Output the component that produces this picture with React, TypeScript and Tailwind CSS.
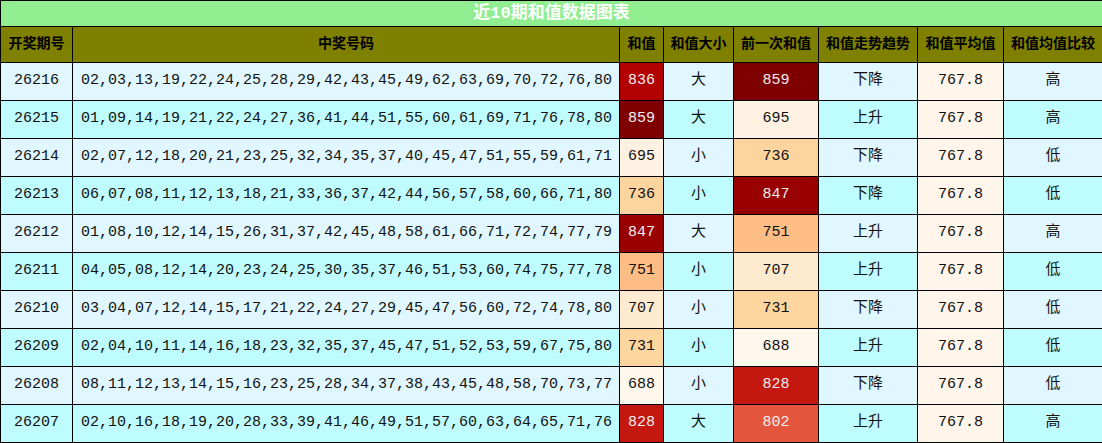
const rows = [
  { id: "26216", nums: "02,03,13,19,22,24,25,28,29,42,43,45,49,62,63,69,70,72,76,80", sum: 836, size: "大", prev: 859, trend: "下降", cmp: "高" },
  { id: "26215", nums: "01,09,14,19,21,22,24,27,36,41,44,51,55,60,61,69,71,76,78,80", sum: 859, size: "大", prev: 695, trend: "上升", cmp: "高" },
  { id: "26214", nums: "02,07,12,18,20,21,23,25,32,34,35,37,40,45,47,51,55,59,61,71", sum: 695, size: "小", prev: 736, trend: "下降", cmp: "低" },
  { id: "26213", nums: "06,07,08,11,12,13,18,21,33,36,37,42,44,56,57,58,60,66,71,80", sum: 736, size: "小", prev: 847, trend: "下降", cmp: "低" },
  { id: "26212", nums: "01,08,10,12,14,15,26,31,37,42,45,48,58,61,66,71,72,74,77,79", sum: 847, size: "大", prev: 751, trend: "上升", cmp: "高" },
  { id: "26211", nums: "04,05,08,12,14,20,23,24,25,30,35,37,46,51,53,60,74,75,77,78", sum: 751, size: "小", prev: 707, trend: "上升", cmp: "低" },
  { id: "26210", nums: "03,04,07,12,14,15,17,21,22,24,27,29,45,47,56,60,72,74,78,80", sum: 707, size: "小", prev: 731, trend: "下降", cmp: "低" },
  { id: "26209", nums: "02,04,10,11,14,16,18,23,32,35,37,45,47,51,52,53,59,67,75,80", sum: 731, size: "小", prev: 688, trend: "上升", cmp: "低" },
  { id: "26208", nums: "08,11,12,13,14,15,16,23,25,28,34,37,38,43,45,48,58,70,73,77", sum: 688, size: "小", prev: 828, trend: "下降", cmp: "低" },
  { id: "26207", nums: "02,10,16,18,19,20,28,33,39,41,46,49,51,57,60,63,64,65,71,76", sum: 828, size: "大", prev: 802, trend: "上升", cmp: "高" },
];

// heat colours for the sum cells
const heat: Record<number, string> = {
  859: "bg-[#7f0000] text-[#eeeeee]",
  847: "bg-[#990000] text-[#eeeeee]",
  836: "bg-[#b30000] text-[#eeeeee]",
  828: "bg-[#c4170f] text-[#eeeeee]",
  802: "bg-[#e4553d] text-[#eeeeee]",
  751: "bg-[#fdbd85] text-[#111111]",
  736: "bg-[#fdd49e] text-[#111111]",
  731: "bg-[#fdd59f] text-[#111111]",
  707: "bg-[#feebcf] text-[#111111]",
  695: "bg-[#fff2e2] text-[#111111]",
  688: "bg-[#fff7ec] text-[#111111]",
};

const headers = ["开奖期号", "中奖号码", "和值", "和值大小", "前一次和值", "和值走势趋势", "和值平均值", "和值均值比较"];
const widths = ["w-[72px]", "w-[547px]", "w-[44px]", "w-[70px]", "w-[85px]", "w-[99px]", "w-[86px]", "w-[99px]"];

export default function App() {
  return (
    <div className="bg-white font-['Liberation_Mono','Noto_Sans_CJK_SC',monospace]">
      <table className="w-[1102px] table-fixed border-collapse border border-black">
        <colgroup>
          {widths.map((w, i) => (
            <col key={i} className={w} />
          ))}
        </colgroup>
        <thead>
          <tr className="h-[26px]">
            <th colSpan={8} className="border border-black bg-[#90ee90] text-[17px] font-bold text-white leading-none">
              近10期和值数据图表
            </th>
          </tr>
          <tr className="h-[36px]">
            {headers.map((h) => (
              <th key={h} className="border border-black bg-[#808000] px-0 text-[14px] font-bold text-black">
                {h}
              </th>
            ))}
          </tr>
        </thead>
        <tbody>
          {rows.map((r, i) => {
            const bg = i % 2 === 0 ? "bg-[#e0f7ff]" : "bg-[#bffcff]";
            return (
              <tr key={r.id} className={`h-[38px] text-[15px] text-[#111111] ${bg}`}>
                <td className="border border-black text-center">{r.id}</td>
                <td className="border border-black pl-[8px] text-left whitespace-nowrap">{r.nums}</td>
                <td className={`border border-black text-center ${heat[r.sum]}`}>{r.sum}</td>
                <td className="border border-black text-center">{r.size}</td>
                <td className={`border border-black text-center ${heat[r.prev]}`}>{r.prev}</td>
                <td className="border border-black text-center">{r.trend}</td>
                <td className="border border-black bg-[#fff5eb] text-center">767.8</td>
                <td className="border border-black text-center">{r.cmp}</td>
              </tr>
            );
          })}
        </tbody>
      </table>
    </div>
  );
}
